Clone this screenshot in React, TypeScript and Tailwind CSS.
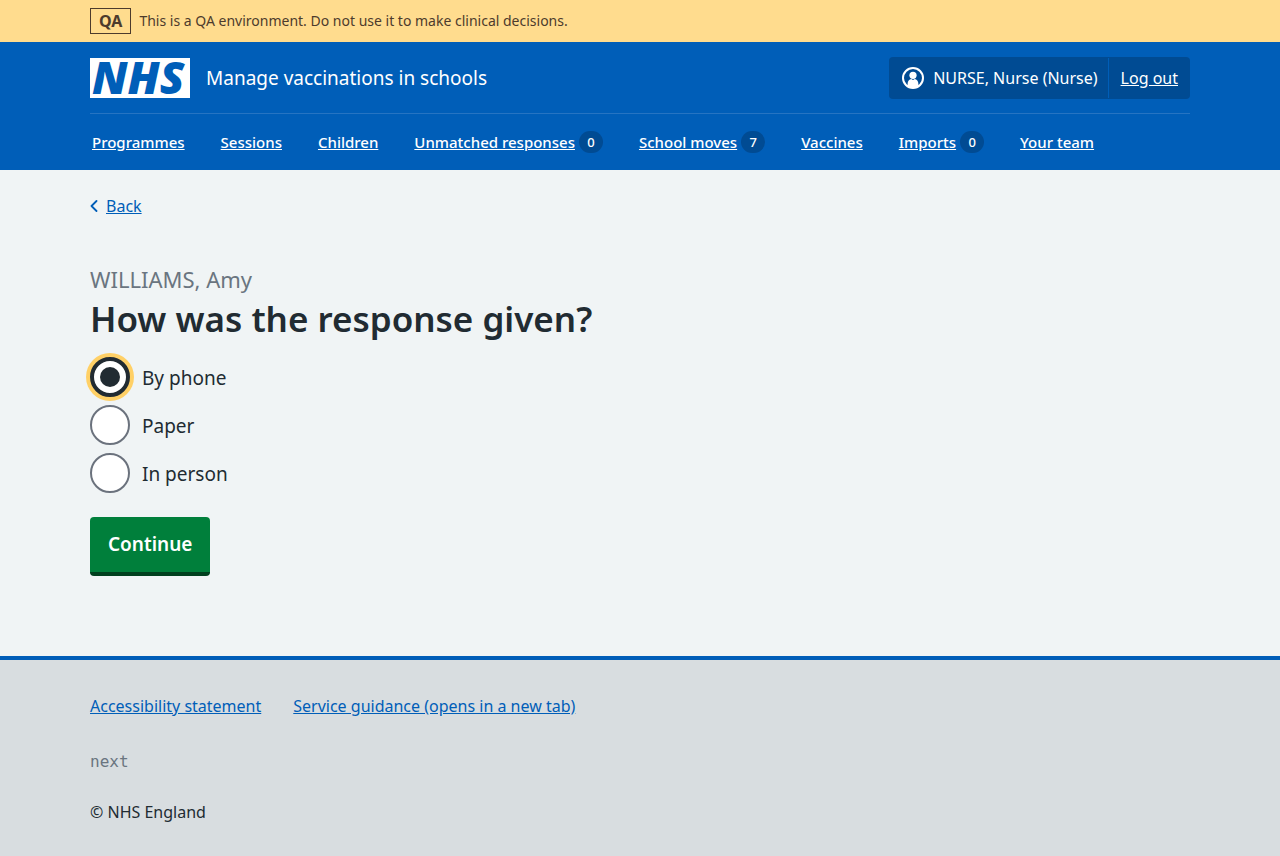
import { useState } from "react";

const navItems: { label: string; count?: number }[] = [
  { label: "Programmes" },
  { label: "Sessions" },
  { label: "Children" },
  { label: "Unmatched responses", count: 0 },
  { label: "School moves", count: 7 },
  { label: "Vaccines" },
  { label: "Imports", count: 0 },
  { label: "Your team" },
];

const options = [
  { id: "phone", label: "By phone" },
  { id: "paper", label: "Paper" },
  { id: "in-person", label: "In person" },
];

const container = "mx-auto w-full max-w-[1164px] px-8";

function Logo() {
  return (
    <svg width="100" height="40" viewBox="0 0 100 40" role="img" aria-label="NHS" className="shrink-0 overflow-visible">
      <rect width="100" height="40" fill="#fff" />
      <text x="2" y="36" fill="#005eb8" fontFamily="'Noto Sans', sans-serif" fontSize="45" fontWeight="900" fontStyle="italic">
        NHS
      </text>
    </svg>
  );
}

function UserIcon() {
  return (
    <svg width="24" height="24" viewBox="0 0 24 24" aria-hidden="true" className="shrink-0">
      <circle cx="12" cy="12" r="10" fill="none" stroke="#fff" strokeWidth="2" />
      <circle cx="12" cy="9.300" r="3.600" fill="#fff" />
      <path d="M6.600 20.400v-2.400c0-2.600 1.700-4.600 3.600-4.900l1.800 1 1.800-1c1.900.3 3.600 2.300 3.600 4.900v2.400C15.900 21.500 14 22 12 22s-3.900-.5-5.400-1.600z" fill="#fff" />
    </svg>
  );
}

export default function App() {
  const [choice, setChoice] = useState("phone");

  return (
    <div className="flex min-h-screen flex-col bg-[#d8dde0] font-['Noto_Sans',sans-serif] text-base leading-6 text-[#212b32]">
      <div className="bg-[#ffdc8e] text-[#4d3b2c]">
        <div className={`${container} flex items-center gap-2 py-2`}>
          <strong className="border border-[#4d3b2c] px-2 font-bold">QA</strong>
          <span className="text-sm">This is a QA environment. Do not use it to make clinical decisions.</span>
        </div>
      </div>

      <header className="bg-[#005eb8] text-white">
        <div className={container}>
          <div className="flex items-center justify-between border-b border-[#2674c2] pt-[15px] pb-[14px]">
            <a href="#" className="flex items-center gap-4">
              <Logo />
              <span className="text-[19px]">Manage vaccinations in schools</span>
            </a>
            <div className="flex items-stretch rounded bg-[#004b93]">
              <div className="flex items-center gap-2 py-[9px] pr-2.5 pl-3">
                <UserIcon />
                <span>NURSE, Nurse (Nurse)</span>
              </div>
              <a href="#" className="my-px border-l border-[#005eb8] px-3 py-2 underline">
                Log out
              </a>
            </div>
          </div>
          <nav aria-label="Menu">
            <ul className="flex gap-9 px-0.5 py-4 text-[15px] leading-6 font-medium">
              {navItems.map((item) => (
                <li key={item.label} className="flex items-center gap-1 whitespace-nowrap">
                  <a href="#" className="underline">
                    {item.label}
                  </a>
                  {item.count !== undefined && (
                    <span className="flex h-[22px] w-6 items-center justify-center rounded-full bg-[#004b93] text-[13px]">
                      {item.count}
                    </span>
                  )}
                </li>
              ))}
            </ul>
          </nav>
        </div>
      </header>

      <div className="bg-[#f0f4f5]">
        <div className={`${container} pt-6 pb-20`}>
          <a href="#" className="inline-flex items-center gap-2 text-[#005eb8]">
            <svg width="8" height="12" viewBox="0 0 8 12" fill="none" aria-hidden="true">
              <path d="M6.500 1L1.500 6l5 5" stroke="#005eb8" strokeWidth="1.800" strokeLinecap="round" strokeLinejoin="round" />
            </svg>
            <span className="underline">Back</span>
          </a>
          <main className="pt-11">
            <form onSubmit={(e) => e.preventDefault()}>
              <fieldset>
                <legend>
                  <h1 className="text-[35px] leading-[46px] font-semibold">
                    <span className="block text-[22px] leading-[34px] font-normal text-[#6a7580]">WILLIAMS, Amy</span>
                    How was the response given?
                  </h1>
                </legend>
                <div className="flex flex-col gap-2 pt-[15px]">
                  {options.map((option) => (
                    <div key={option.id} className="flex items-center gap-3">
                      <input
                        type="radio"
                        id={option.id}
                        name="response"
                        value={option.id}
                        autoFocus={option.id === "phone"}
                        checked={choice === option.id}
                        onChange={() => setChoice(option.id)}
                        className="grid size-10 shrink-0 appearance-none place-content-center rounded-full border-2 border-[#6b727d] bg-white outline-none before:size-5 before:rounded-full checked:before:bg-[#212b32] focus:border-4 focus:border-[#212b32] focus:ring-4 focus:ring-[#ffd066]"
                      />
                      <label htmlFor={option.id} className="pt-0.5 text-[19px]">
                        {option.label}
                      </label>
                    </div>
                  ))}
                </div>
              </fieldset>
              <button
                type="submit"
                className="mt-6 rounded border-b-4 border-[#00401e] bg-[#007f3b] px-[18px] py-[14px] text-[19px] leading-[27px] font-semibold text-white"
              >
                Continue
              </button>
            </form>
          </main>
        </div>
      </div>

      <footer className="border-t-4 border-[#005eb8]">
        <div className={`${container} py-[34px]`}>
          <ul className="flex flex-wrap gap-8 text-[#005eb8]">
            <li>
              <a href="#" className="underline">
                Accessibility statement
              </a>
            </li>
            <li>
              <a href="#" className="underline">
                Service guidance (opens in a new tab)
              </a>
            </li>
          </ul>
          <p className="pt-8 font-['DejaVu_Sans_Mono',monospace] text-[#6a7580]">next</p>
          <p className="pt-[26px]">© NHS England</p>
        </div>
      </footer>
    </div>
  );
}
